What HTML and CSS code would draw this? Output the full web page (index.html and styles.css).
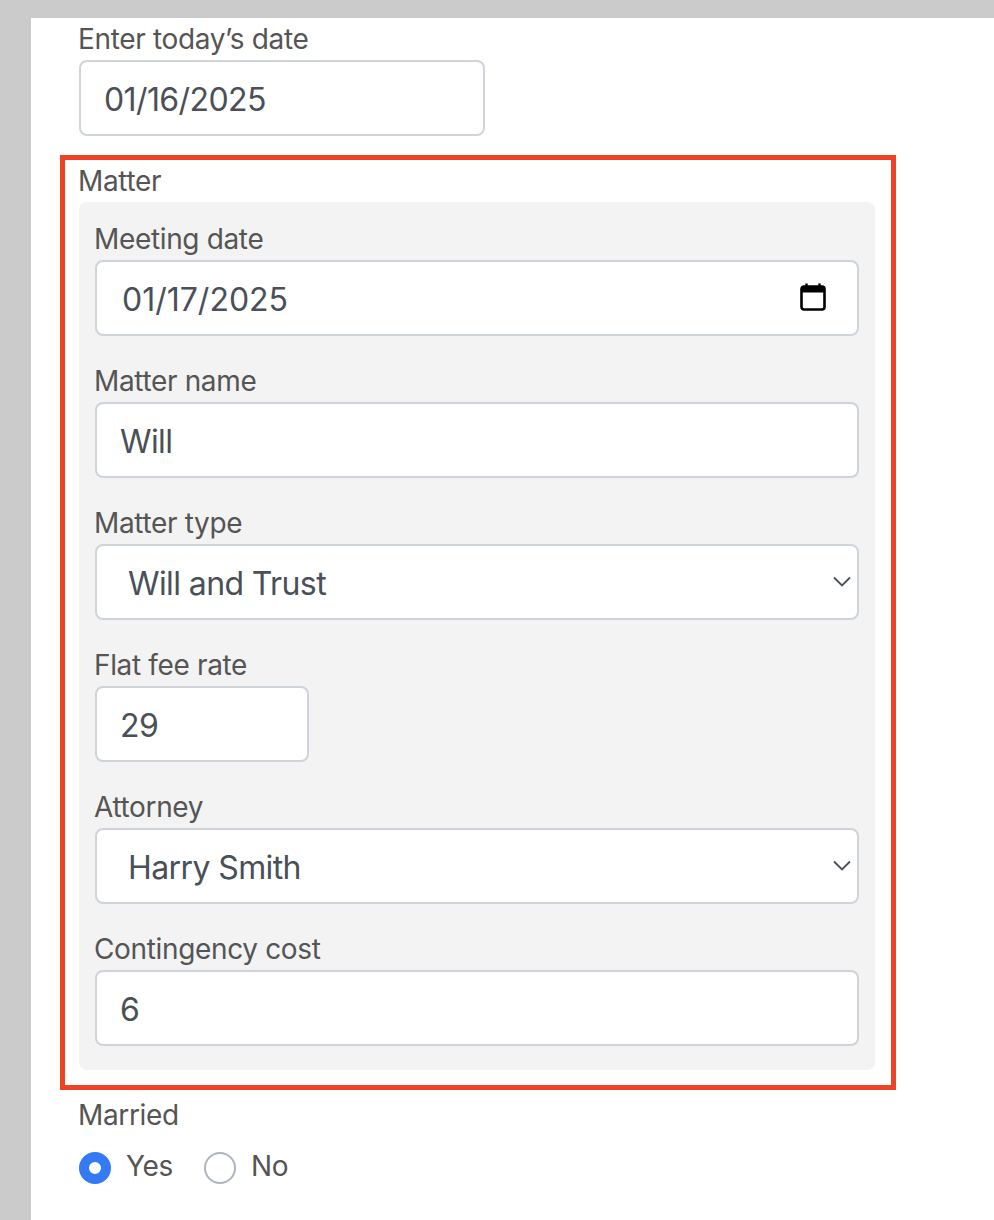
FILE: index.html
```html
<!DOCTYPE html>
<html lang="en">
<head>
    <meta charset="UTF-8">
    <meta name="viewport" content="width=device-width, initial-scale=1.0">
    <title>Matter form</title>
    <link rel="stylesheet" href="styles.css">
</head>
<body>
    <form class="page">
        <div class="form-group top-group">
            <label for="today">Enter today’s date</label>
            <input class="field field-short" type="text" id="today" value="01/16/2025">
        </div>

        <div class="highlight">
            <label>Matter</label>
            <div class="matter">
                <div class="form-group">
                    <label for="meeting">Meeting date</label>
                    <div class="field-wrap">
                        <input class="field field-date" type="text" id="meeting" value="01/17/2025">
                        <svg class="calendar" width="26" height="28" viewBox="0 0 26 28">
                            <path d="M6.5 0.5v4M19.5 0.5v4" stroke="#000" stroke-width="2.4" fill="none"/>
                            <rect x="1.5" y="3.5" width="23" height="23" rx="2.5" fill="none" stroke="#000" stroke-width="2.6"/>
                            <rect x="1.5" y="3.5" width="23" height="6" fill="#000"/>
                        </svg>
                    </div>
                </div>

                <div class="form-group">
                    <label for="name">Matter name</label>
                    <input class="field" type="text" id="name" value="Will">
                </div>

                <div class="form-group">
                    <label for="type">Matter type</label>
                    <div class="field-wrap">
                        <select class="field field-select" id="type">
                            <option>Will and Trust</option>
                        </select>
                        <svg class="chevron" width="18" height="11" viewBox="0 0 18 11">
                            <path d="M1 1.5l8 8 8-8" stroke="#495057" stroke-width="1.8" fill="none"/>
                        </svg>
                    </div>
                </div>

                <div class="form-group">
                    <label for="rate">Flat fee rate</label>
                    <input class="field field-rate" type="text" id="rate" value="29">
                </div>

                <div class="form-group">
                    <label for="attorney">Attorney</label>
                    <div class="field-wrap">
                        <select class="field field-select" id="attorney">
                            <option>Harry Smith</option>
                        </select>
                        <svg class="chevron" width="18" height="11" viewBox="0 0 18 11">
                            <path d="M1 1.5l8 8 8-8" stroke="#495057" stroke-width="1.8" fill="none"/>
                        </svg>
                    </div>
                </div>

                <div class="form-group">
                    <label for="cost">Contingency cost</label>
                    <input class="field" type="text" id="cost" value="6">
                </div>
            </div>
        </div>

        <div class="form-group married">
            <label>Married</label>
            <div class="radios">
                <input class="radio" type="radio" name="married" id="yes" checked>
                <label class="radio-label" for="yes">Yes</label>
                <input class="radio" type="radio" name="married" id="no">
                <label class="radio-label" for="no">No</label>
            </div>
        </div>
    </form>
</body>
</html>
```

FILE: styles.css
```css
html, body {
    height: 100%;
}
body {
    margin: 0;
    background-color: #cbcbcb;
    font-family: Inter, "Liberation Sans", sans-serif;
    color: #555;
    overflow: hidden;
}
.page {
    box-sizing: border-box;
    min-height: 1202px;
    margin: 18px 0 0 31px;
    padding-left: 29px;
    background-color: white;
}
label {
    display: block;
    height: 42px;
    margin-left: -1px;
    font-size: 28px;
    letter-spacing: -0.35px;
    line-height: 43px;
}
.field {
    display: block;
    box-sizing: border-box;
    width: 100%;
    height: 76px;
    padding: 2px 23px 0;
    background-color: white;
    border: 2px solid #ced4da;
    border-radius: 8px;
    font-family: inherit;
    font-size: 32px;
    letter-spacing: -0.6px;
    color: #495057;
}
.field-short {
    width: 406px;
}
.field-date {
    padding-left: 25px;
    letter-spacing: 0;
}
.field-rate {
    width: 214px;
}
.field-select {
    padding-left: 31px;
    appearance: none;
}
.field-wrap {
    position: relative;
}
.calendar {
    position: absolute;
    top: 23px;
    right: 33px;
}
.chevron {
    position: absolute;
    top: 32px;
    right: 8px;
}
.top-group,
.married {
    margin-left: 19px;
}
.highlight {
    box-sizing: border-box;
    width: 836px;
    margin-top: 19px;
    padding: 0 16px 15px 14px;
    border: 5px solid #ee4325;
}
.matter {
    padding: 16px 16px 24px;
    background-color: #f3f3f3;
    border-radius: 8px;
}
.matter .form-group + .form-group {
    margin-top: 24px;
}
.married {
    margin-top: 4px;
}
.radios {
    display: flex;
    align-items: center;
    height: 32px;
    margin-top: 16px;
}
.radio {
    box-sizing: border-box;
    flex: none;
    width: 32px;
    height: 32px;
    margin: 0 16px 0 0;
    background-color: white;
    border: 2px solid #adb5bd;
    border-radius: 50%;
    appearance: none;
}
.radio:checked {
    background-color: white;
    border: 10px solid #3479f6;
}
.radio-label {
    margin-right: 31px;
    line-height: 38px;
}
```
